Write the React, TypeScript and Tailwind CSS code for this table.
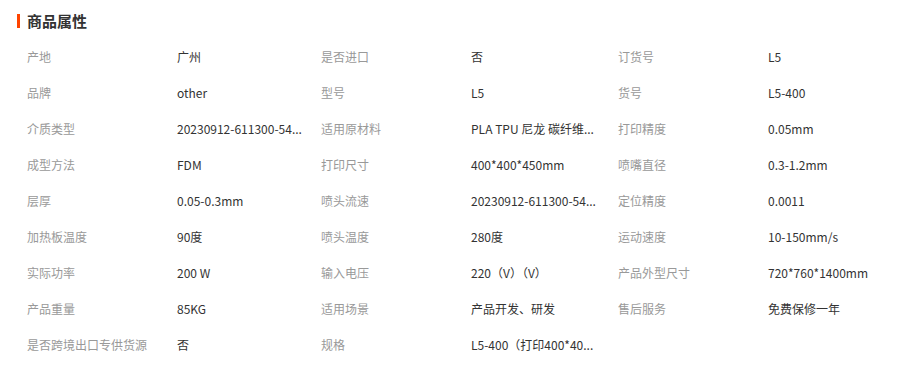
import React from "react";

const rows: [string, string][][] = [
  [["产地", "广州"], ["是否进口", "否"], ["订货号", "L5"]],
  [["品牌", "other"], ["型号", "L5"], ["货号", "L5-400"]],
  [["介质类型", "20230912-611300-54..."], ["适用原材料", "PLA TPU 尼龙 碳纤维..."], ["打印精度", "0.05mm"]],
  [["成型方法", "FDM"], ["打印尺寸", "400*400*450mm"], ["喷嘴直径", "0.3-1.2mm"]],
  [["层厚", "0.05-0.3mm"], ["喷头流速", "20230912-611300-54..."], ["定位精度", "0.0011"]],
  [["加热板温度", "90度"], ["喷头温度", "280度"], ["运动速度", "10-150mm/s"]],
  [["实际功率", "200 W"], ["输入电压", "220（V）（V）"], ["产品外型尺寸", "720*760*1400mm"]],
  [["产品重量", "85KG"], ["适用场景", "产品开发、研发"], ["售后服务", "免费保修一年"]],
  [["是否跨境出口专供货源", "否"], ["规格", "L5-400（打印400*40..."]],
];

export default function App() {
  return (
    <div
      className="w-[906px] h-[373px] bg-white overflow-hidden"
      style={{ fontFamily: '"Noto Sans CJK SC", "Noto Sans", sans-serif' }}
    >
      <div className="h-[39px] pt-[3px] pl-[17px] flex items-center">
        <div className="w-[3px] h-[14px] bg-[#ff4400]" />
        <div className="ml-[7px] text-[15px] font-bold text-[#333] leading-[18px]">商品属性</div>
      </div>
      <div className="pl-[27px]">
        {rows.map((row, i) => (
          <div key={i} className="grid grid-cols-[294px_297px_297px] h-[36px] items-center text-[12px] leading-[16px]">
            {row.map(([k, v], j) => (
              <div key={j} className="flex items-center">
                <div className="w-[150px] shrink-0 text-[#999] whitespace-nowrap">{k}</div>
                <div className="text-[#333] whitespace-nowrap">{v}</div>
              </div>
            ))}
          </div>
        ))}
      </div>
    </div>
  );
}
